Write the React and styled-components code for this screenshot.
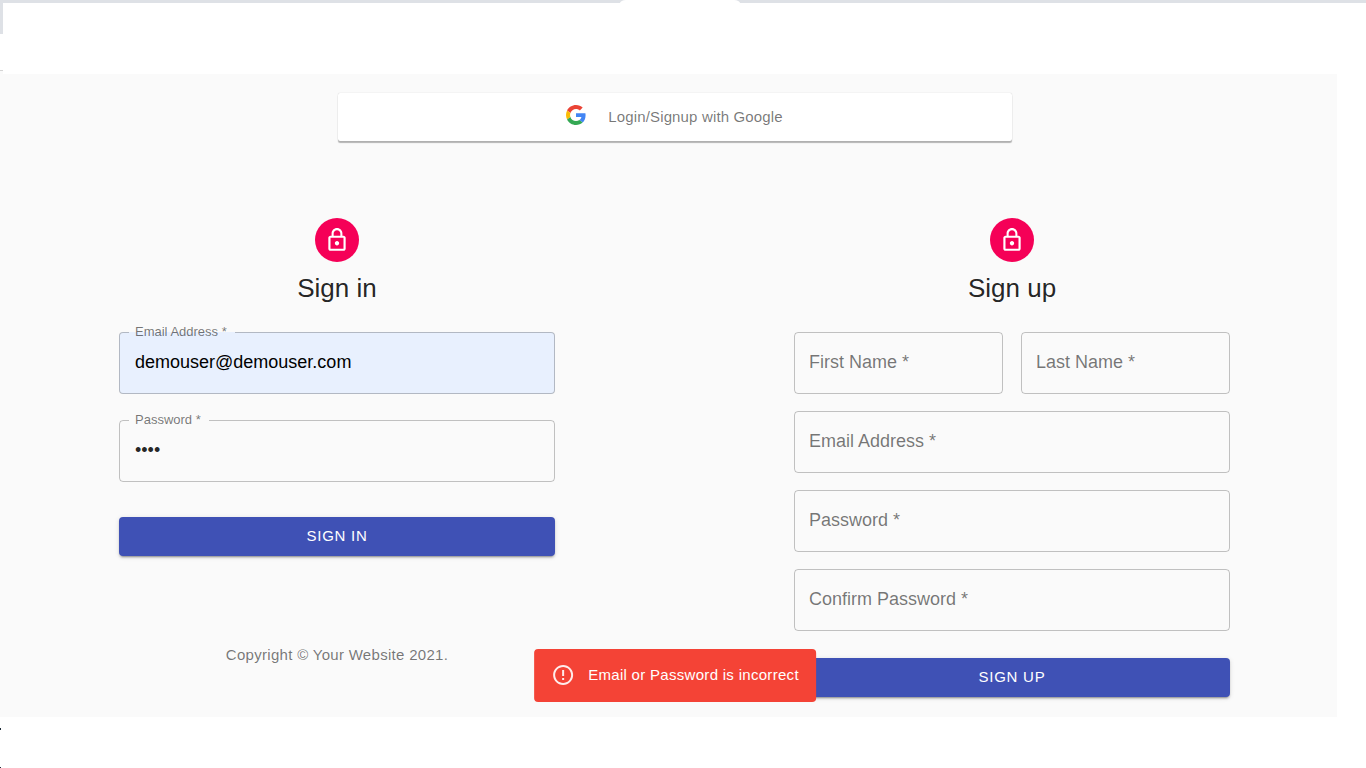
import React from "react";
import styled, { createGlobalStyle } from "styled-components";

const GlobalStyle = createGlobalStyle`
  *, *::before, *::after { box-sizing: border-box; }
  body {
    margin: 0;
    background: #fff;
    color: rgba(0, 0, 0, 0.87);
    font-family: "Liberation Sans", Arial, sans-serif;
  }
  button, input { font-family: inherit; }
`;

const Page = styled.div`
  display: flex;
  flex-direction: column;
  min-height: 100vh;
`;

const WindowTop = styled.header`
  display: flex;
  flex-direction: column;
  height: 74px;
`;

const TabStrip = styled.div`
  display: flex;
  justify-content: center;
  height: 3px;
  padding-right: 6px;
  background: #dee1e6;
`;

const ActiveTab = styled.div`
  width: 120px;
  background: #fff;
  border-radius: 6px 6px 0 0 / 3px 3px 0 0;
`;

const WindowEdge = styled.div`
  width: 3px;
  height: 31px;
  background: #dee1e6;
`;

const WindowCorner = styled.div`
  width: 3px;
  height: 4px;
  margin-top: auto;
  background: #fafafa;
  border-top: 1px solid #d4d4d4;
`;

const Main = styled.main`
  margin-right: 29px;
  background: #fafafa;
`;

const Content = styled.div`
  position: relative;
  margin-right: -13px;
  padding: 19px 0 20px;
`;

const GoogleRow = styled.div`
  width: 50%;
  margin: 0 auto 77px;
  padding-right: 1px;
  transform: none;
`;

const GoogleButton = styled.button`
  display: flex;
  align-items: center;
  justify-content: center;
  gap: 22px;
  width: 100%;
  height: 48px;
  padding: 0 0 4px;
  border: 0;
  border-radius: 2px;
  background: #fff;
  color: rgba(0, 0, 0, 0.54);
  font-size: 15px;
  letter-spacing: 0.01em;
  box-shadow: 0 2px 1px rgba(0, 0, 0, 0.28), 0 0 1px rgba(0, 0, 0, 0.24);

  span { padding-top: 2px; }
`;

const Columns = styled.div`
  display: grid;
  grid-template-columns: 1fr 1fr;
`;

const Panel = styled.section`
  display: flex;
  flex-direction: column;
  align-items: center;
  padding: 0 120px 0 119px;
`;

const Avatar = styled.div`
  display: grid;
  place-items: center;
  width: 44px;
  height: 44px;
  border-radius: 50%;
  background: #f50057;
`;

const Title = styled.h1`
  margin: 9px 0 27px;
  font-size: 26px;
  font-weight: 400;
  line-height: 34px;
`;

const Form = styled.form`
  display: flex;
  flex-direction: column;
  gap: ${(p) => p.$gap}px;
  width: 100%;
`;

const NameRow = styled.div`
  display: grid;
  grid-template-columns: 1fr 1fr;
  gap: 18px;
`;

const FilledField = styled.fieldset`
  min-width: 0;
  margin: -7px 0 0;
  padding: 0;
  border: 1px solid rgba(0, 0, 0, 0.23);
  border-radius: 4px;
  background: ${(p) => (p.$autofilled ? "#e8f0fe" : "transparent")};

  legend {
    height: 15px;
    margin-left: 9px;
    padding: 0 8px 0 6px;
    color: rgba(0, 0, 0, 0.54);
    font-size: 13px;
    line-height: 13px;
  }
  input {
    display: block;
    width: 100%;
    height: 53px;
    padding: 0 15px 9px;
    border: 0;
    outline: 0;
    background: transparent;
    color: ${(p) => (p.$autofilled ? "#000" : "rgba(0, 0, 0, 0.87)")};
    font-size: 18px;
  }
`;

const EmptyField = styled.div`
  position: relative;

  label {
    position: absolute;
    top: 20px;
    left: 15px;
    color: rgba(0, 0, 0, 0.54);
    font-size: 18px;
    line-height: 20px;
    pointer-events: none;
  }
  input {
    display: block;
    width: 100%;
    height: 62px;
    padding: 0 15px;
    border: 1px solid rgba(0, 0, 0, 0.23);
    border-radius: 4px;
    outline: 0;
    background: transparent;
    font-size: 18px;
  }
`;

const SubmitButton = styled.button`
  height: 39px;
  margin-top: ${(p) => p.$space}px;
  padding: 0 0 2px;
  border: 0;
  border-radius: 4px;
  background: #3f51b5;
  color: #fff;
  font-size: 15px;
  font-weight: 500;
  letter-spacing: 0.05em;
  box-shadow: 0 3px 1px -2px rgba(0, 0, 0, 0.2), 0 2px 2px rgba(0, 0, 0, 0.14),
    0 1px 5px rgba(0, 0, 0, 0.12);
`;

const Copyright = styled.p`
  margin: 88px 0 0;
  color: rgba(0, 0, 0, 0.54);
  font-size: 15px;
  line-height: 22px;
  letter-spacing: 0.02em;
`;

const Snackbar = styled.div`
  position: absolute;
  bottom: 15px;
  left: 50%;
  display: flex;
  align-items: center;
  gap: 13px;
  height: 53px;
  padding: 0 17px 2px;
  border-radius: 4px;
  background: #f44336;
  color: #fff;
  font-size: 15px;
  font-weight: 500;
  letter-spacing: 0.02em;
  white-space: nowrap;
  transform: translateX(-50%);
`;

const WindowBottom = styled.footer`
  display: flex;
  flex: 1;
  flex-direction: column;
  justify-content: space-between;
  min-height: 51px;
  padding-top: 11px;
`;

const EdgeMark = styled.div`
  width: 1px;
  height: ${(p) => p.$size}px;
  background: #1d2b36;
`;

const GoogleIcon = () => (
  <svg width="20" height="20" viewBox="0 0 48 48" aria-hidden="true">
    <path fill="#EA4335" d="M24 9.5c3.54 0 6.71 1.22 9.21 3.6l6.85-6.85C35.9 2.38 30.47 0 24 0 14.62 0 6.51 5.38 2.56 13.22l7.98 6.19C12.43 13.72 17.74 9.5 24 9.5z" />
    <path fill="#4285F4" d="M46.98 24.55c0-1.57-.15-3.09-.38-4.55H24v9.02h12.94c-.58 2.96-2.26 5.48-4.78 7.18l7.73 6c4.51-4.18 7.09-10.36 7.09-17.65z" />
    <path fill="#FBBC05" d="M10.53 28.59c-.48-1.45-.76-2.99-.76-4.59s.27-3.14.76-4.59l-7.98-6.19C.92 16.46 0 20.12 0 24c0 3.88.92 7.54 2.56 10.78l7.97-6.19z" />
    <path fill="#34A853" d="M24 48c6.48 0 11.93-2.13 15.89-5.81l-7.73-6c-2.15 1.45-4.92 2.3-8.16 2.3-6.26 0-11.57-4.22-13.47-9.91l-7.98 6.19C6.51 42.62 14.62 48 24 48z" />
  </svg>
);

const LockIcon = () => (
  <svg width="26" height="26" viewBox="0 0 24 24" fill="#fff" aria-hidden="true">
    <path d="M12 17c1.1 0 2-.9 2-2s-.9-2-2-2-2 .9-2 2 .9 2 2 2zm6-9h-1V6c0-2.76-2.24-5-5-5S7 3.24 7 6v2H6c-1.1 0-2 .9-2 2v10c0 1.1.9 2 2 2h12c1.1 0 2-.9 2-2V10c0-1.1-.9-2-2-2zM8.9 6c0-1.71 1.39-3.1 3.1-3.1s3.1 1.39 3.1 3.1v2H8.9V6zM18 20H6V10h12v10z" />
  </svg>
);

const ErrorIcon = () => (
  <svg width="24" height="24" viewBox="0 0 24 24" fill="#fff" fillOpacity="0.9" aria-hidden="true">
    <path d="M11 15h2v2h-2zm0-8h2v6h-2zm.99-5C6.47 2 2 6.48 2 12s4.47 10 9.99 10C17.52 22 22 17.52 22 12S17.52 2 11.99 2zM12 20c-4.42 0-8-3.58-8-8s3.58-8 8-8 8 3.58 8 8-3.58 8-8 8z" />
  </svg>
);

const Field = ({ id, label, type = "text" }) => (
  <EmptyField>
    <input id={id} type={type} />
    <label htmlFor={id}>{label} *</label>
  </EmptyField>
);

const ValueField = ({ id, label, type = "text", value, autofilled }) => (
  <FilledField $autofilled={autofilled}>
    <legend>
      <label htmlFor={id}>{label} *</label>
    </legend>
    <input id={id} type={type} defaultValue={value} />
  </FilledField>
);

const PanelHeader = ({ children }) => (
  <>
    <Avatar>
      <LockIcon />
    </Avatar>
    <Title>{children}</Title>
  </>
);

export default function App() {
  return (
    <Page>
      <GlobalStyle />
      <WindowTop>
        <TabStrip>
          <ActiveTab />
        </TabStrip>
        <WindowEdge />
        <WindowCorner />
      </WindowTop>
      <Main>
        <Content>
          <GoogleRow>
            <GoogleButton type="button">
              <GoogleIcon />
              <span>Login/Signup with Google</span>
            </GoogleButton>
          </GoogleRow>
          <Columns>
            <Panel>
              <PanelHeader>Sign in</PanelHeader>
              <Form $gap={26}>
                <ValueField id="login-email" label="Email Address" value="demouser@demouser.com" autofilled />
                <ValueField id="login-password" label="Password" type="password" value="demo" />
                <SubmitButton type="button" $space={9}>SIGN IN</SubmitButton>
              </Form>
              <Copyright>Copyright © Your Website 2021.</Copyright>
            </Panel>
            <Panel>
              <PanelHeader>Sign up</PanelHeader>
              <Form $gap={17}>
                <NameRow>
                  <Field id="first-name" label="First Name" />
                  <Field id="last-name" label="Last Name" />
                </NameRow>
                <Field id="email" label="Email Address" type="email" />
                <Field id="password" label="Password" type="password" />
                <Field id="confirm" label="Confirm Password" type="password" />
                <SubmitButton type="button" $space={10}>SIGN UP</SubmitButton>
              </Form>
            </Panel>
          </Columns>
          <Snackbar role="alert">
            <ErrorIcon />
            <span>Email or Password is incorrect</span>
          </Snackbar>
        </Content>
      </Main>
      <WindowBottom>
        <EdgeMark $size={2} />
        <EdgeMark $size={1} />
      </WindowBottom>
    </Page>
  );
}
